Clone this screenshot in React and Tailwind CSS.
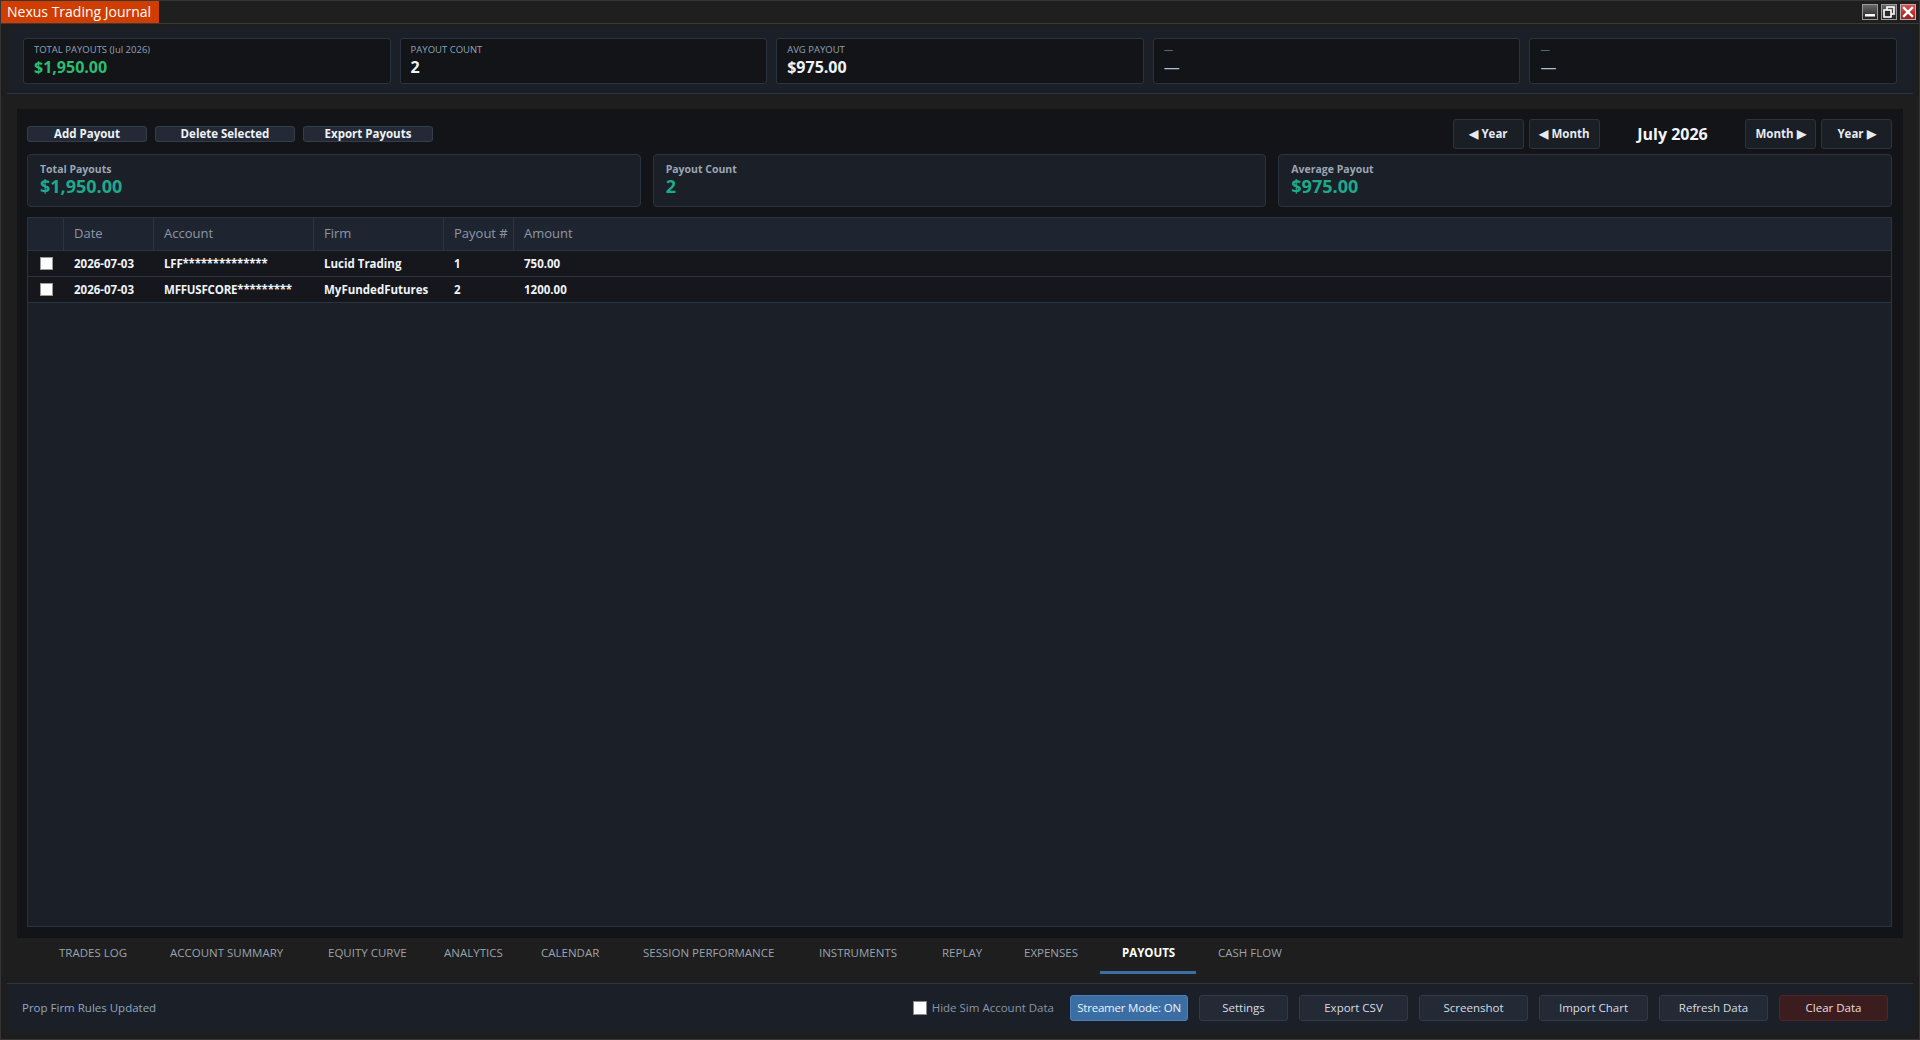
import React from "react";

const topCards = [
  { label: "TOTAL PAYOUTS (Jul 2026)", value: "$1,950.00", green: true },
  { label: "PAYOUT COUNT", value: "2" },
  { label: "AVG PAYOUT", value: "$975.00" },
  { label: "—", value: "—", dash: true },
  { label: "—", value: "—", dash: true },
];

const statCards = [
  { label: "Total Payouts", value: "$1,950.00" },
  { label: "Payout Count", value: "2" },
  { label: "Average Payout", value: "$975.00" },
];

const rows = [
  { date: "2026-07-03", account: "LFF**************", firm: "Lucid Trading", n: "1", amount: "750.00" },
  { date: "2026-07-03", account: "MFFUSFCORE*********", firm: "MyFundedFutures", n: "2", amount: "1200.00" },
];

const tabs = [
  { t: "TRADES LOG", w: "w-[111px]" },
  { t: "ACCOUNT SUMMARY", w: "w-[158px]" },
  { t: "EQUITY CURVE", w: "w-[116px]" },
  { t: "ANALYTICS", w: "w-[97px]" },
  { t: "CALENDAR", w: "w-[102px]" },
  { t: "SESSION PERFORMANCE", w: "w-[176px]" },
  { t: "INSTRUMENTS", w: "w-[123px]" },
  { t: "REPLAY", w: "w-[82px]" },
  { t: "EXPENSES", w: "w-[98px]" },
  { t: "PAYOUTS", w: "w-[96px]" },
  { t: "CASH FLOW", w: "w-[110px]" },
];

function WinButtons() {
  return (
    <div className="flex items-center gap-[3px] pr-[3px]">
      <svg width="16" height="16" viewBox="0 0 16 16">
        <defs>
          <linearGradient id="g1" x1="0" y1="0" x2="0" y2="1">
            <stop offset="0" stopColor="#6a6a6a" />
            <stop offset="1" stopColor="#1e1e1e" />
          </linearGradient>
          <linearGradient id="g2" x1="0" y1="0" x2="0" y2="1">
            <stop offset="0" stopColor="#e05050" />
            <stop offset="1" stopColor="#9a1c1c" />
          </linearGradient>
        </defs>
        <rect x="0.5" y="0.5" width="15" height="15" fill="url(#g1)" stroke="#9a9a9a" />
        <rect x="3" y="10" width="10" height="2.5" fill="#ffffff" />
      </svg>
      <svg width="16" height="16" viewBox="0 0 16 16">
        <rect x="0.5" y="0.5" width="15" height="15" fill="url(#g1)" stroke="#9a9a9a" />
        <rect x="6" y="3" width="7" height="7" fill="none" stroke="#ffffff" strokeWidth="1.6" />
        <rect x="3" y="6" width="7" height="7" fill="#2a2a2a" stroke="#ffffff" strokeWidth="1.6" />
      </svg>
      <svg width="16" height="16" viewBox="0 0 16 16">
        <rect x="0.5" y="0.5" width="15" height="15" fill="url(#g2)" stroke="#b0b0b0" />
        <path d="M4 4 L12 12 M12 4 L4 12" stroke="#ffffff" strokeWidth="2.4" strokeLinecap="square" />
      </svg>
    </div>
  );
}

const actionBtn =
  "h-[16px] bg-[#232a36] border border-[#343d4b] rounded-[3px] text-[11.5px] leading-[14px] font-bold text-[#eef2f6]";
const navBtn =
  "w-[71px] h-[30px] bg-[#1a1e25] border border-[#2c3340] rounded-[3px] text-[11.5px] font-bold text-[#e6ebf2]";
const barBtn =
  "h-[26px] bg-[#232a36] border border-[#313a48] rounded-[3px] text-[11.5px] text-[#d7dce4]";

export default function App() {
  return (
    <div className="w-[1920px] h-[1040px] bg-[#1e1e1e] border border-[#353535] flex flex-col overflow-hidden font-['Open_Sans','Noto_Sans',sans-serif]">
      {/* Title bar */}
      <div className="h-[23px] shrink-0 flex items-center justify-between border-b border-[#3a3a3a] bg-[#1f1f1f]">
        <div className="h-full bg-[#d03d00] text-white text-[14px] leading-[22px] px-[6px] w-[158px] whitespace-nowrap">
          Nexus Trading Journal
        </div>
        <WinButtons />
      </div>

      {/* Top summary strip */}
      <div className="mt-[4px] mx-[6px] h-[66px] shrink-0 bg-[#1b1f27] border-b border-[#2b3341] px-[16px] pt-[10px]">
        <div className="grid grid-cols-5 gap-[9px]">
          {topCards.map((c, i) => (
            <div key={i} className="h-[46px] bg-[#131418] border border-[#2c3340] rounded-[3px] px-[10px] pt-[5px]">
              <div className="text-[9.5px] leading-[12px] text-[#8da2b8] whitespace-nowrap">{c.label}</div>
              <div
                className={
                  "mt-[2px] text-[16px] leading-[18px] " +
                  (c.green
                    ? "text-[#2bbd70] font-bold"
                    : c.dash
                    ? "text-[#a8bfd6] font-normal"
                    : "text-[#eef3f8] font-bold")
                }
              >
                {c.value}
              </div>
            </div>
          ))}
        </div>
      </div>

      {/* Main panel */}
      <div className="mt-[15px] mx-[16px] h-[829px] shrink-0 bg-[#131418] pt-[10px] pl-[10px] pr-[11px] pb-[11px] flex flex-col">
        {/* Toolbar */}
        <div className="h-[30px] shrink-0 flex items-center justify-between">
          <div className="flex items-center gap-[8px]">
            <button className={actionBtn + " w-[120px]"}>Add Payout</button>
            <button className={actionBtn + " w-[140px]"}>Delete Selected</button>
            <button className={actionBtn + " w-[130px]"}>Export Payouts</button>
          </div>
          <div className="flex items-center gap-[5px]">
            <button className={navBtn}>◀ Year</button>
            <button className={navBtn}>◀ Month</button>
            <div className="w-[135px] text-center text-[16px] font-bold text-[#f2f5f9]">July 2026</div>
            <button className={navBtn}>Month ▶</button>
            <button className={navBtn}>Year ▶</button>
          </div>
        </div>

        {/* Stat cards */}
        <div className="mt-[5px] grid grid-cols-3 gap-[12px]">
          {statCards.map((s, i) => (
            <div key={i} className="h-[53px] bg-[#1b1f27] border border-[#2c3340] rounded-[4px] pl-[12px] pt-[8px]">
              <div className="text-[10.5px] leading-[13px] font-bold text-[#9aa6b6]">{s.label}</div>
              <div className="text-[18px] leading-[20px] font-bold text-[#1fa88a]">{s.value}</div>
            </div>
          ))}
        </div>

        {/* Table */}
        <div className="mt-[10px] flex-1 bg-[#1b1f27] border border-[#2c3340] flex flex-col">
          <div className="h-[33px] shrink-0 flex bg-[#1f2530] border-b border-[#2c3340] text-[13px] text-[#8b97a7]">
            <div className="w-[36px] border-r border-[#2c3340]"></div>
            <div className="w-[90px] border-r border-[#2c3340] pl-[10px] flex items-center">Date</div>
            <div className="w-[160px] border-r border-[#2c3340] pl-[10px] flex items-center">Account</div>
            <div className="w-[130px] border-r border-[#2c3340] pl-[10px] flex items-center">Firm</div>
            <div className="w-[70px] border-r border-[#2c3340] pl-[10px] flex items-center overflow-hidden whitespace-nowrap">
              Payout #
            </div>
            <div className="flex-1 pl-[10px] flex items-center">Amount</div>
          </div>
          {rows.map((r, i) => (
            <div
              key={i}
              className="h-[26px] shrink-0 flex items-center bg-[#15171c] border-b border-[#2c3340] text-[11.5px] font-bold text-[#f0f3f7]"
            >
              <div className="w-[36px] flex items-center justify-center">
                <div className="w-[13px] h-[13px] bg-white border border-[#9a9a9a]"></div>
              </div>
              <div className="w-[90px] pl-[10px]">{r.date}</div>
              <div className="w-[160px] pl-[10px] whitespace-nowrap tracking-[-0.2px]">{r.account}</div>
              <div className="w-[130px] pl-[10px] whitespace-nowrap">{r.firm}</div>
              <div className="w-[70px] pl-[10px]">{r.n}</div>
              <div className="flex-1 pl-[10px]">{r.amount}</div>
            </div>
          ))}
        </div>
      </div>

      {/* Tab bar */}
      <div className="mx-[6px] h-[46px] shrink-0 border-b border-[#2b3341] flex items-start pl-[30px]">
        {tabs.map(({ t, w }) => {
          const active = t === "PAYOUTS";
          return (
            <div
              key={t}
              className={
                w +
                " h-[36px] pl-[22px] pt-[7px] border-b-[3px] text-[11.5px] leading-[16px] whitespace-nowrap " +
                (active ? "border-[#3b6ea6] text-white font-bold" : "border-transparent text-[#9aa3ae]")
              }
            >
              {t}
            </div>
          );
        })}
      </div>

      {/* Status bar */}
      <div className="mx-[6px] h-[48px] shrink-0 bg-[#1b1f27] flex items-center justify-between pl-[15px] pr-[25px]">
        <div className="text-[11.5px] text-[#8fa8c2]">Prop Firm Rules Updated</div>
        <div className="flex items-center">
          <div className="flex items-center gap-[5px] mr-[16px]">
            <div className="w-[14px] h-[14px] bg-white border border-[#8a8a8a]"></div>
            <span className="text-[11.5px] text-[#8b96a5]">Hide Sim Account Data</span>
          </div>
          <div className="flex items-center gap-[11px]">
            <button className="w-[118px] h-[26px] bg-[#3a6ea5] border border-[#4b80b8] rounded-[3px] text-[11.5px] text-[#eef3fa] tracking-[-0.2px]">
              Streamer Mode: ON
            </button>
            <button className={barBtn + " w-[89px]"}>Settings</button>
            <button className={barBtn + " w-[109px]"}>Export CSV</button>
            <button className={barBtn + " w-[109px]"}>Screenshot</button>
            <button className={barBtn + " w-[109px]"}>Import Chart</button>
            <button className={barBtn + " w-[109px]"}>Refresh Data</button>
            <button className="w-[109px] h-[26px] bg-[#3c1d1f] border border-[#4a2729] rounded-[3px] text-[11.5px] text-[#ecdcdc]">
              Clear Data
            </button>
          </div>
        </div>
      </div>
    </div>
  );
}
